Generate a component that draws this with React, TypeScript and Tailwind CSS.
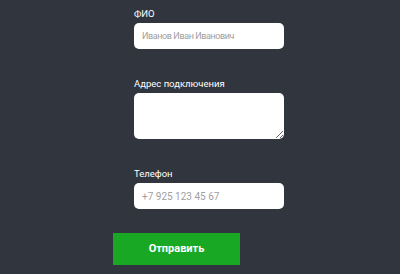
import React from 'react';

const font = { fontFamily: 'Roboto, "Noto Sans", sans-serif' };

function Field({ label, children }: { label: string; children: React.ReactNode }) {
  return (
    <div className="flex flex-col">
      <label className="text-[9.5px] leading-[14px] text-white mb-[2px]">{label}</label>
      {children}
    </div>
  );
}

const inputCls =
  'h-[26px] w-full rounded-[5px] bg-white px-[8px] text-gray-800 placeholder:text-[#a0a0a0] outline-none';

export default function App() {
  return (
    <div className="w-[400px] h-[274px] bg-[#31363e] overflow-hidden" style={font}>
      <div className="flex flex-col pl-[113px] pt-[7px]">
        <div className="flex flex-col gap-[28px] ml-[21px] w-[150px]">
          <Field label="ФИО">
            <input
              type="text"
              placeholder="Иванов Иван Иванович"
              className={`${inputCls} text-[9px] tracking-[-0.4px]`}
            />
          </Field>
          <Field label="Адрес подключения">
            <textarea className="h-[46px] w-full rounded-[5px] bg-white px-[8px] py-[4px] text-[10px] outline-none block" />
          </Field>
          <Field label="Телефон">
            <input type="text" placeholder="+7 925 123 45 67" className={`${inputCls} text-[10px]`} />
          </Field>
        </div>
        <button className="mt-[24px] w-[127px] h-[32px] bg-[#19a824] text-white text-[11px] font-bold">
          Отправить
        </button>
      </div>
    </div>
  );
}
